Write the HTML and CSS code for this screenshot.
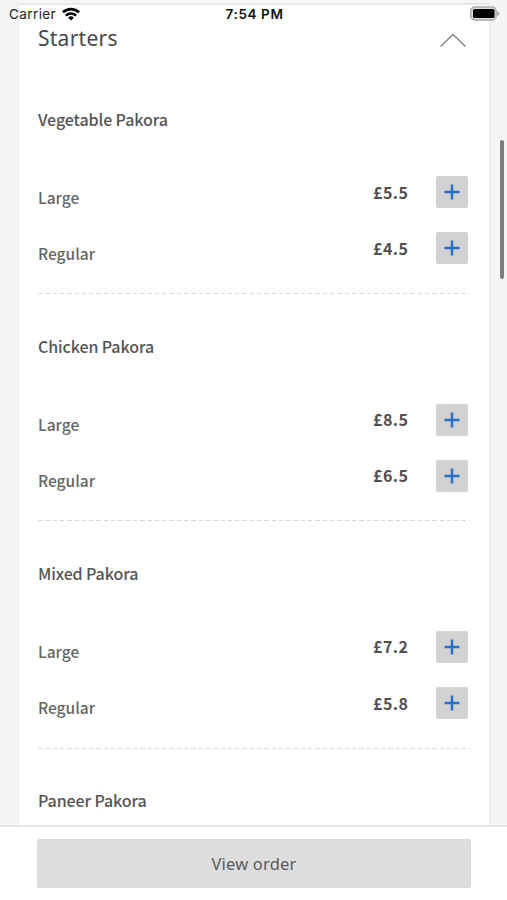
FILE: index.html
```html
<!DOCTYPE html>
<html lang="en">
<head>
    <meta charset="UTF-8">
    <meta name="viewport" content="width=device-width, initial-scale=1.0">
    <title>Menu</title>
    <link rel="stylesheet" href="styles.css">
</head>
<body>
    <svg width="0" height="0" class="symbols">
        <symbol id="plus" viewBox="0 0 16 16">
            <path d="M.5 8h15M8 .5v15" fill="none" stroke="#2a70c8" stroke-width="2.500"/>
        </symbol>
    </svg>

    <!-- Phone status bar -->
    <div class="status-bar">
        <div class="carrier">
            <span>Carrier</span>
            <svg class="wifi" viewBox="0 0 18 14" width="18" height="14">
                <path d="M1 5.300a11.600 11.600 0 0 1 16 0" fill="none" stroke="#000" stroke-width="2.800"/>
                <path d="M3.900 8.600a7.300 7.300 0 0 1 10.200 0" fill="none" stroke="#000" stroke-width="2.500"/>
                <path d="M9 13.500L6.200 10.700a4 4 0 0 1 5.600 0z"/>
            </svg>
        </div>
        <div class="time">7:54 PM</div>
        <svg class="battery" viewBox="0 0 31 15" width="31" height="15">
            <rect x="1.700" y="1" width="25.500" height="13" rx="4" fill="#ddd" stroke="#aaa" stroke-width="1.300"/>
            <rect x="4" y="3" width="21.500" height="9" rx="1.500"/>
            <path d="M28.300 5v5q2.200-1 2.200-2.500T28.300 5z" fill="#aaa"/>
        </svg>
    </div>

    <div class="card">
        <div class="section-header">
            <h2>Starters</h2>
            <svg class="chevron" viewBox="0 0 28 15" width="28" height="15">
                <path d="M1.500 13.500L14 1.500l12.500 12" fill="none" stroke="#808080" stroke-width="1.300"/>
            </svg>
        </div>

        <div class="item">
            <h3>Vegetable Pakora</h3>
            <div class="option"><span class="size">Large</span><span class="price">£5.5</span><button class="add"><svg><use href="#plus"/></svg></button></div>
            <div class="option"><span class="size">Regular</span><span class="price">£4.5</span><button class="add"><svg><use href="#plus"/></svg></button></div>
        </div>
        <div class="item">
            <h3>Chicken Pakora</h3>
            <div class="option"><span class="size">Large</span><span class="price">£8.5</span><button class="add"><svg><use href="#plus"/></svg></button></div>
            <div class="option"><span class="size">Regular</span><span class="price">£6.5</span><button class="add"><svg><use href="#plus"/></svg></button></div>
        </div>
        <div class="item">
            <h3>Mixed Pakora</h3>
            <div class="option"><span class="size">Large</span><span class="price">£7.2</span><button class="add"><svg><use href="#plus"/></svg></button></div>
            <div class="option"><span class="size">Regular</span><span class="price">£5.8</span><button class="add"><svg><use href="#plus"/></svg></button></div>
        </div>
        <div class="item">
            <h3>Paneer Pakora</h3>
        </div>
    </div>

    <div class="scrollbar"></div>

    <div class="footer">
        <button class="view-order">View order</button>
    </div>
</body>
</html>
```

FILE: styles.css
```css
* {
    box-sizing: border-box;
}

body {
    margin: 0;
    height: 100vh;
    padding-top: 3px;
    overflow: hidden;
    display: flex;
    flex-direction: column;
    position: relative;
    background: #f5f5f5;
    color: #555;
    font-family: "Noto Sans CJK SC", "Noto Sans", sans-serif;
}

.symbols {
    position: absolute;
}

/* Status bar lies over the scrolled page */
.status-bar {
    position: absolute;
    top: 0;
    left: 0;
    right: 0;
    height: 27px;
    padding: 0 7px 0 9px;
    display: grid;
    grid-template-columns: 1fr auto 1fr;
    align-items: center;
    color: #111;
    font-family: Inter, sans-serif;
    font-size: 13.5px;
}

.carrier {
    display: flex;
    align-items: center;
    gap: 6px;
    color: #222;
    letter-spacing: 0.4px;
}

.time {
    font-weight: 600;
    letter-spacing: 0.6px;
}

.battery {
    justify-self: end;
}

.card {
    flex: 1;
    min-height: 0;
    overflow: hidden;
    margin: 0 17px 0 18px;
    padding: 0 19px;
    background: #fff;
    border: 1px solid #ececec;
    border-top: 2px solid #e8e8e8;
    border-bottom: 0;
}

.section-header {
    height: 62px;
    padding: 16px 3px 0 0;
    display: flex;
    justify-content: space-between;
    align-items: flex-start;
}

.section-header h2 {
    margin: 0;
    color: #484848;
    font-family: "Noto Sans", sans-serif;
    font-size: 21px;
    font-weight: 400;
    line-height: 34px;
    letter-spacing: 0.25px;
}

.chevron {
    margin-top: 12px;
}

/* One dish with its sizes, dashed line below */
.item {
    height: 227.2px;
    padding: 38.6px 2px 0 0;
    background: repeating-linear-gradient(90deg, #d8d8d8 0 4.3px, #fff 4.3px 7.3px) 0 100% / 100% 1px no-repeat;
}

.item + .item {
    padding-top: 38.8px;
}

.item h3 {
    margin: 0 0 44.8px;
    font-size: 16px;
    font-weight: 500;
    line-height: 26px;
    letter-spacing: -0.1px;
}

.option {
    display: flex;
    align-items: center;
    height: 32px;
    margin-bottom: 24.1px;
}

.size {
    flex: 1;
    padding-top: 8.6px;
    color: #666;
    font-size: 15.5px;
    font-weight: 500;
}

.price {
    margin-right: 27.5px;
    padding-bottom: 1px;
    color: #505050;
    font-size: 16px;
    font-weight: 700;
    letter-spacing: 0.5px;
}

.add {
    display: flex;
    align-items: center;
    justify-content: center;
    width: 32px;
    height: 32px;
    padding: 0;
    border: 0;
    border-radius: 2px;
    background: #d2d2d2;
}

.add svg {
    width: 16px;
    height: 16px;
}

.scrollbar {
    position: absolute;
    top: 140px;
    right: 3px;
    width: 4px;
    height: 139px;
    border-radius: 2px;
    background: #7c7c7c;
}

.footer {
    height: 75px;
    padding: 12px 36px 0 37px;
    background: #fff;
    border-top: 2px solid #e6e6e6;
}

.view-order {
    width: 100%;
    height: 49px;
    border: 1px solid #d8d8d8;
    border-radius: 2px;
    background: #ddd;
    color: #5a5a5a;
    font-family: "Noto Sans", sans-serif;
    font-size: 16.5px;
    letter-spacing: 0.2px;
}
```
